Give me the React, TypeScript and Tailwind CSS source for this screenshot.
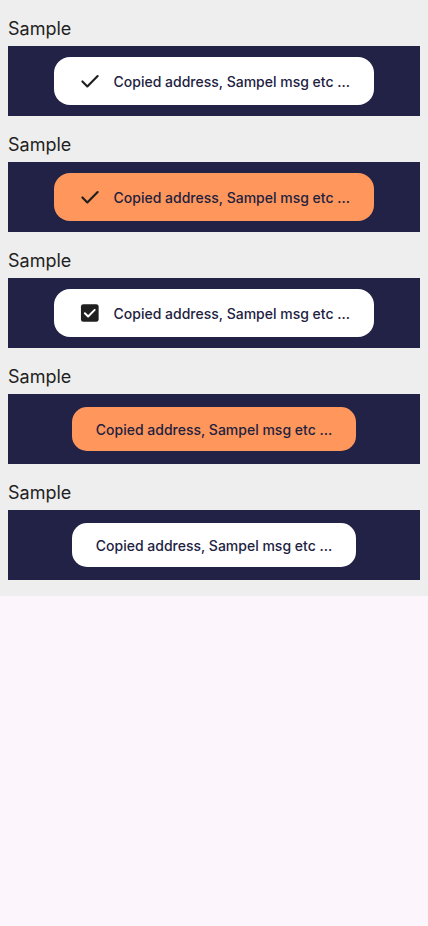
import React from 'react';

const MSG = 'Copied address, Sampel msg etc ...';

const CheckIcon = () => (
  <svg width="24" height="24" viewBox="0 0 24 24" fill="none">
    <path d="M4.5 12.5l5 5L20 7" stroke="#1f1f1f" strokeWidth="2.2" strokeLinecap="round" strokeLinejoin="round" />
  </svg>
);

const CheckboxIcon = () => (
  <svg width="24" height="24" viewBox="0 0 24 24" fill="none">
    <rect x="3" y="3" width="18" height="18" rx="2.5" fill="#1f1f1f" />
    <path d="M7 12.2l3.3 3.3L17 8.8" stroke="#ffffff" strokeWidth="2" strokeLinecap="round" strokeLinejoin="round" />
  </svg>
);

type ToastProps = {
  tone: 'white' | 'orange';
  icon?: 'check' | 'box';
};

const Toast = ({ tone, icon }: ToastProps) => {
  const bg = tone === 'white' ? 'bg-white' : 'bg-[#ff965c]';
  if (!icon) {
    return (
      <div className={`${bg} h-[44px] px-6 rounded-[15px] flex items-center`}>
        <span className="text-[14px] font-medium text-[#22223f] whitespace-nowrap">{MSG}</span>
      </div>
    );
  }
  return (
    <div className={`${bg} h-[48px] w-[320px] pl-6 pr-6 rounded-[16px] flex items-center gap-3`}>
      {icon === 'check' ? <CheckIcon /> : <CheckboxIcon />}
      <span className="text-[14px] font-medium text-[#22223f] whitespace-nowrap">{MSG}</span>
    </div>
  );
};

const Sample = ({ children }: { children: React.ReactNode }) => (
  <div>
    <div className="pt-[15px] pb-[3px] text-[18px] leading-[28px] text-[#1f1f1f]">Sample</div>
    <div className="bg-[#222246] h-[70px] flex items-center justify-center">{children}</div>
  </div>
);

export default function App() {
  return (
    <div className="min-h-[926px] bg-[#fcf6fc]" style={{ fontFamily: 'Inter, "Noto Sans", sans-serif' }}>
      <div className="bg-[#eeeeee] px-2 pb-4">
        <Sample>
          <Toast tone="white" icon="check" />
        </Sample>
        <Sample>
          <Toast tone="orange" icon="check" />
        </Sample>
        <Sample>
          <Toast tone="white" icon="box" />
        </Sample>
        <Sample>
          <Toast tone="orange" />
        </Sample>
        <Sample>
          <Toast tone="white" />
        </Sample>
      </div>
    </div>
  );
}
